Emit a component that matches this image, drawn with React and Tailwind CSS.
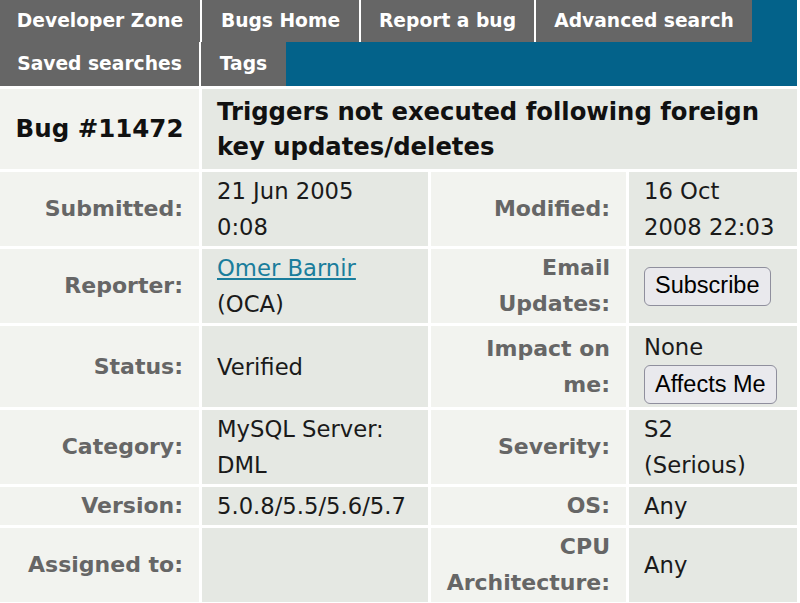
const font = { fontFamily: '"DejaVu Sans", Verdana, sans-serif' };

function Label({ children }) {
  return (
    <div className="bg-[#f2f3ef] flex items-center justify-end text-right pr-4 pl-2 py-px font-bold text-[22px] leading-[36px] text-[#666666]">
      <div>{children}</div>
    </div>
  );
}

function Value({ children }) {
  return (
    <div className="bg-[#e5e8e3] flex items-center pl-[15px] pr-2 py-px text-[22.7px] leading-[36px] text-[#1a1a1a]">
      <div>{children}</div>
    </div>
  );
}

function Btn({ children }) {
  return (
    <button
      className="h-[39px] px-[10px] rounded-[6px] border border-[#8f8f9d] bg-[#e9e9ed] text-[23.5px] text-black leading-none"
      style={{ fontFamily: '"Liberation Sans", Arial, sans-serif' }}
    >
      {children}
    </button>
  );
}

const tabs1 = [
  ["Developer Zone", "w-[200px]"],
  ["Bugs Home", "w-[159px]"],
  ["Report a bug", "w-[175px]"],
  ["Advanced search", "w-[218px]"],
];
const tabs2 = [
  ["Saved searches", "w-[199px]"],
  ["Tags", "w-[87px]"],
];

export default function App() {
  return (
    <div className="w-[800px] h-[603px] bg-white overflow-hidden" style={font}>
      {/* top navigation */}
      <nav className="w-[797px] bg-[#03628a]">
        <div className="flex h-[42px]">
          {tabs1.map(([t, w], i) => (
            <div
              key={t}
              className={`${w} bg-[#666666] flex items-center justify-center text-white font-bold text-[18.7px] ${i > 0 ? "border-l-2 border-white" : ""}`}
            >
              {t}
            </div>
          ))}
        </div>
        <div className="flex h-[44px]">
          {tabs2.map(([t, w], i) => (
            <div
              key={t}
              className={`${w} bg-[#666666] flex items-center justify-center text-white font-bold text-[18.7px] ${i > 0 ? "border-l-2 border-white" : ""}`}
            >
              {t}
            </div>
          ))}
        </div>
      </nav>

      {/* bug details */}
      <div className="mt-[3px] w-[797px] grid grid-cols-[199px_226px_195px_168px] gap-[3px]">
        <div className="bg-[#f2f3ef] flex items-center justify-center font-bold text-[24.5px] text-[#111]">
          Bug #11472
        </div>
        <div className="col-span-3 bg-[#e5e8e3] pl-[15px] pr-4 py-[5px] font-bold text-[24.3px] leading-[35px] text-[#111]">
          Triggers not executed following foreign key updates/deletes
        </div>

        <Label>Submitted:</Label>
        <Value>21 Jun 2005<br />0:08</Value>
        <Label>Modified:</Label>
        <Value>16 Oct<br />2008 22:03</Value>

        <Label>Reporter:</Label>
        <Value>
          <a href="#" className="text-[#1a7d9c] underline">Omer Barnir</a>
          <br />(OCA)
        </Value>
        <Label>Email<br />Updates:</Label>
        <Value>
          <Btn>Subscribe</Btn>
        </Value>

        <Label>Status:</Label>
        <Value>Verified</Value>
        <Label>Impact on<br />me:</Label>
        <div className="bg-[#e5e8e3] pl-[15px] pt-[3px] pb-[3px] text-[22.7px] leading-[36px] text-[#1a1a1a]">
          <div>None</div>
          <Btn>Affects Me</Btn>
        </div>

        <Label>Category:</Label>
        <Value>MySQL Server:<br />DML</Value>
        <Label>Severity:</Label>
        <Value>S2<br />(Serious)</Value>

        <Label>Version:</Label>
        <Value>5.0.8/5.5/5.6/5.7</Value>
        <Label>OS:</Label>
        <Value>Any</Value>

        <Label>Assigned to:</Label>
        <Value></Value>
        <Label>CPU<br />Architecture:</Label>
        <Value>Any</Value>
      </div>
    </div>
  );
}
